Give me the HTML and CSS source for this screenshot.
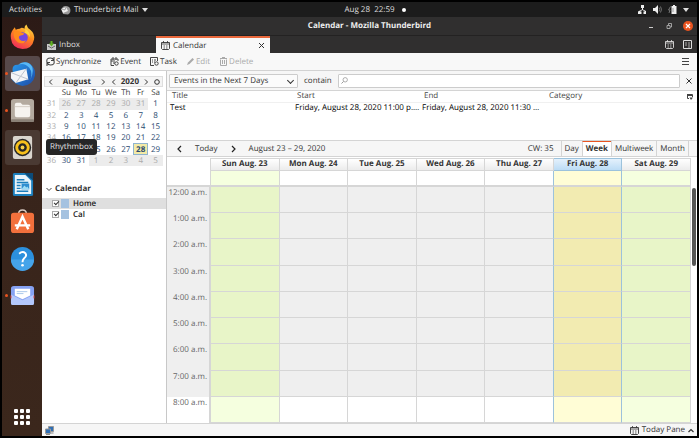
FILE: index.html
```
<!DOCTYPE html>
<html lang="en">
<head>
  <meta charset="UTF-8" />
  <meta name="viewport" content="width=device-width, initial-scale=1.0"/>
  <title>Calendar - Mozilla Thunderbird</title>
  <link rel="stylesheet" href="styles.css">
</head>
<body>
  <header class="topbar">
    <div class="topbar-left">
      <button class="plain">Activities</button>
      <button class="plain app-menu">
        <svg width="10" height="10" viewBox="0 0 10 10"><path d="M1 4C1 1 5 0 8 2C10 4 10 8 7 9.500L2 9Z" fill="#999"/><path d="M0 4L5 2L7 6L2 8Z" fill="#eee"/><path d="M0 4L4 5L5 2" fill="none" stroke="#777" stroke-width=".6"/></svg>
        Thunderbird Mail
        <svg width="6" height="4" viewBox="0 0 6 4"><path d="M0 0H6L3 4Z" fill="#ddd"/></svg>
      </button>
    </div>
    <button class="plain clock">Aug 28&nbsp; 22:59 <span class="notify-dot"></span></button>
    <div class="topbar-right">
      <svg width="9" height="9" viewBox="0 0 9 9" fill="#eee"><path d="M3 0H6V3H5V4.500L8 6V9H5.500V6.500H7L4.500 5L2 6.500H3.500V9H0V6.500L4 4.500V3H3Z"/></svg>
      <svg width="9" height="9" viewBox="0 0 9 9"><path d="M0 3H2L5 0V9L2 6H0Z" fill="#eee"/><path d="M6 2.500Q7.500 4.500 6 6.500M7.500 1.500Q9.500 4.500 7.500 7.500" fill="none" stroke="#888" stroke-width=".8"/></svg>
      <svg width="9" height="9" viewBox="0 0 9 9"><path d="M5 0H7V1H8.500V9H3.500V1H5Z" fill="#eee"/><path d="M5 3V7M2.500 1.500L.5 5H2L1 8" stroke="#888" stroke-width=".8" fill="none"/></svg>
      <svg width="6" height="4" viewBox="0 0 6 4"><path d="M0 0H6L3 4Z" fill="#ddd"/></svg>
    </div>
  </header>

  <div class="desktop">
    <nav class="dock">
      <a href="#" class="dock-item" aria-label="Firefox">
        <svg viewBox="0 0 26 26">
          <defs>
            <linearGradient id="fx" x1=".8" y1="0" x2=".3" y2="1"><stop offset="0" stop-color="#ffe14a"/><stop offset=".45" stop-color="#ff8a1e"/><stop offset="1" stop-color="#f02a5c"/></linearGradient>
            <linearGradient id="bird" x1="0" y1="0" x2="1" y2="1"><stop offset="0" stop-color="#2a9df0"/><stop offset="1" stop-color="#1d4ba6"/></linearGradient>
          </defs>
          <path d="M3 6L5 3.500L6 6Q8 5 10 5L12 4Q14 4 15 5Q15 2 17 .5Q18 4 21 6Q26 10 25 16Q23 26 13 26Q2 25 1 15Q0 10 3 6Z" fill="url(#fx)"/>
          <circle cx="13" cy="14" r="5.500" fill="#7547e0"/>
          <path d="M4 8Q9 6 12 9L15 10Q14 12 11 12Q8 13 10 16Q13 19 17 17Q14 22 8 19Q3 15 4 8Z" fill="#ff8b1d"/>
          <path d="M15 5Q21 7 21 14Q19 10 15 9Q17 7 15 5Z" fill="#ffd33d"/>
        </svg>
      </a>
      <a href="#" class="dock-item active running" aria-label="Thunderbird Mail">
        <svg viewBox="0 0 26 26">
          <path d="M3 12Q1 3 9 4Q14 -1 21 3Q27 8 26 15Q24 25 13 26Q5 25 1 18Z" fill="url(#bird)"/>
          <path d="M8 4Q15 1 20 7Q24 12 21 20Q25 12 23 6Q18 -2 8 4Z" fill="#59b8f5"/>
          <path d="M1 12L17 8L19 19L6 23L1 18Z" fill="#f4f5f7"/>
          <path d="M1 12L11 16L17 8M11 16L6 23M11 16L19 19" fill="none" stroke="#b9c0cb"/>
        </svg>
      </a>
      <a href="#" class="dock-item running" aria-label="Files">
        <svg viewBox="0 0 26 26">
          <rect x="1" y="1" width="24" height="24" rx="3" fill="#b4aa9f"/>
          <rect x="1" y="22" width="24" height="3" rx="1" fill="#8b8177"/>
          <path d="M5 7Q5 5 7 5H11L13 7H19Q21 7 21 9V18Q21 20 19 20H7Q5 20 5 18Z" fill="#f6f3ef"/>
          <path d="M5 9H21" stroke="#d3ccc4"/>
        </svg>
      </a>
      <a href="#" class="dock-item hover" aria-label="Rhythmbox">
        <svg viewBox="0 0 26 26">
          <rect x="3" y="1" width="20" height="24" rx="2" fill="#d9d5cd"/>
          <circle cx="13" cy="13" r="9" fill="#262626"/>
          <circle cx="13" cy="13" r="6" fill="none" stroke="#f7c01c" stroke-width="3"/>
          <circle cx="13" cy="13" r="2" fill="#f7d24a"/>
        </svg>
      </a>
      <a href="#" class="dock-item" aria-label="LibreOffice Writer">
        <svg viewBox="0 0 26 26">
          <path d="M4 1H17L24 8V24Q24 25 22 25H5Q3 25 3 24V2Z" fill="#1c7fbd"/>
          <path d="M5 3H16L22 9V23H5Z" fill="#e9f4fb"/>
          <path d="M15 1H24V9Z" fill="#0c4b78"/>
          <path d="M7 8H15M7 11H19M7 14H11M7 17H11M7 20H19" stroke="#1c7fbd" stroke-width="1.500"/>
          <rect x="12" y="12" width="8" height="6" fill="#2f8ed0"/>
          <path d="M12 18L15 14L17 16L18 15L20 18Z" fill="#9ddcf5"/>
        </svg>
      </a>
      <a href="#" class="dock-item" aria-label="Ubuntu Software">
        <svg viewBox="0 0 26 26">
          <path d="M9 5Q9 1 13 1Q17 1 17 5" fill="none" stroke="#d8cbc4" stroke-width="1.500"/>
          <rect x="1" y="4" width="24" height="21" rx="3" fill="#f2703c"/>
          <path d="M7 21L13 8L19 21M5 17H21" fill="none" stroke="#fff" stroke-width="2.500"/>
        </svg>
      </a>
      <a href="#" class="dock-item" aria-label="Help">
        <svg viewBox="0 0 26 26">
          <circle cx="13" cy="13" r="12" fill="#2c90dd"/>
          <path d="M1 14A12 12 0 0 0 25 14Z" fill="#45a4ea"/>
          <path d="M9.500 8Q13 5 16 7.500Q18 10.500 14.500 13Q13 14.500 13 17" fill="none" stroke="#fff" stroke-width="2"/>
          <circle cx="13" cy="20" r="1.400" fill="#fff"/>
        </svg>
      </a>
      <a href="#" class="dock-item running" aria-label="Mail">
        <svg viewBox="0 0 26 26">
          <rect x="1" y="3" width="24" height="20" rx="3" fill="#86a1f2"/>
          <path d="M5 6H21V13L13 17L5 13Z" fill="#fff"/>
          <path d="M7 9H18M7 11H14" stroke="#a9c7ea"/>
          <path d="M1 12L13 18L25 12V21Q25 23 23 23H3Q1 23 1 21Z" fill="#b3c7fb"/>
          <path d="M1 13V16M25 13V16" stroke="#d43b3b"/>
        </svg>
      </a>
      <button class="plain show-apps" aria-label="Show Applications">
        <i></i><i></i><i></i><i></i><i></i><i></i><i></i><i></i><i></i>
      </button>
      <span class="tooltip">Rhythmbox</span>
    </nav>

    <main class="window">
      <div class="titlebar">
        <span class="title">Calendar - Mozilla Thunderbird</span>
        <div class="window-buttons">
          <button class="plain" aria-label="Minimize"><svg width="8" height="8" viewBox="0 0 8 8"><path d="M2 5.500H6" stroke="#ccc"/></svg></button>
          <button class="plain" aria-label="Restore"><svg width="8" height="8" viewBox="0 0 8 8"><path d="M2 3.500H5V6.500H2ZM3.500 3V1.500H6.500V5H5" fill="none" stroke="#bbb" stroke-width=".8"/></svg></button>
          <button class="plain close" aria-label="Close"><svg width="10" height="10" viewBox="0 0 10 10"><path d="M3 3L7 7M7 3L3 7" stroke="#fff" stroke-width="1.200"/></svg></button>
        </div>
      </div>

      <div class="tabs">
        <button class="tab">
          <svg width="9" height="9" viewBox="0 0 9 9"><path d="M0 3H9V9H0Z" fill="#c9c9c9"/><path d="M1 5L4.500 7L8 5" fill="none" stroke="#666"/><path d="M3.500 0H5.500V2.500H7L4.500 5.500L2 2.500H3.500Z" fill="#62b322"/></svg>
          Inbox
        </button>
        <button class="tab selected">
          <svg width="9" height="9" viewBox="0 0 9 9"><use href="#cal"/></svg>
          <span>Calendar</span>
          <svg class="tab-close" width="7" height="7" viewBox="0 0 7 7"><path d="M1 1L6 6M6 1L1 6" stroke="#333"/></svg>
        </button>
        <div class="tab-actions">
          <button class="plain" aria-label="Calendar"><svg width="9" height="9" viewBox="0 0 9 9"><g id="cal"><path d="M.5 1.500H8.500V7.500L7.500 8.500H1.500L.5 7.500Z" fill="none" stroke="currentColor" stroke-width=".9"/><path d="M1 3H8M2.500 0V2M6.500 0V2M2.500 5H4M5 5H6.500M2.500 7H4M5 7H6.500" stroke="currentColor" stroke-width=".8"/></g></svg></button>
          <button class="plain" aria-label="Tasks"><svg width="9" height="9" viewBox="0 0 9 9"><path d="M.5 .5H8.500V8.500H.5Z" fill="none" stroke="#ddd"/><path d="M2 3H4M5 3H7M2 5H4M5 5H7M5 7H7" stroke="#aaa"/></svg></button>
        </div>
      </div>

      <div class="toolbar">
        <button class="tool"><svg width="9" height="9" viewBox="0 0 9 9"><path d="M1 5Q0 1 4.500 1Q7 1 7.500 3M8 0V3.500H5M8 4Q9 8 4.500 8Q2 8 1.500 6M1 9V5.500H4" fill="none" stroke="#444" stroke-width="1.100"/></svg>Synchronize</button>
        <button class="tool"><svg width="9" height="9" viewBox="0 0 9 9"><path d="M4 8.500H1V2H8V4M3 0V3M6 0V3M1 4H5M3 6H5" fill="none" stroke="#444"/><circle cx="6.500" cy="6.500" r="1.700" fill="none" stroke="#444"/></svg>Event</button>
        <button class="tool"><svg width="9" height="9" viewBox="0 0 9 9"><path d="M4 8.500H.5V.5H7.500V4M2 3H3M4 3H6M2 5H3M4 5H5" fill="none" stroke="#444"/><circle cx="6.500" cy="6.500" r="1.700" fill="none" stroke="#444"/></svg>Task</button>
        <button class="tool" disabled><svg width="9" height="9" viewBox="0 0 9 9"><path d="M1 8L2 5.500L6.500 1L8 2.500L3.500 7Z" fill="#aaa"/></svg>Edit</button>
        <button class="tool" disabled><svg width="9" height="9" viewBox="0 0 9 9"><path d="M1 1.500H8M3 .5H6M1.500 2.500V8.500H7.500V2.500M3.500 3V7M5.500 3V7" fill="none" stroke="#aaa"/></svg>Delete</button>
        <button class="plain menu" aria-label="Menu"><svg width="7" height="7" viewBox="0 0 7 7"><path d="M0 .5H7M0 3.500H7M0 6.500H7" stroke="#444"/></svg></button>
      </div>

      <div class="content">
        <aside class="sidebar">
          <div class="month-nav">
            <button class="plain" aria-label="Previous month"><svg width="5" height="6" viewBox="0 0 5 6"><path id="prev" d="M4 .5L1.500 3L4 5.500" fill="none" stroke="#333"/></svg></button>
            <b class="month-name">August</b>
            <button class="plain" aria-label="Next month"><svg width="5" height="6" viewBox="0 0 5 6"><path id="next" d="M1 .5L3.500 3L1 5.500" fill="none" stroke="#333"/></svg></button>
            <button class="plain" aria-label="Previous year"><svg width="5" height="6" viewBox="0 0 5 6"><use href="#prev"/></svg></button>
            <b>2020</b>
            <button class="plain" aria-label="Next year"><svg width="5" height="6" viewBox="0 0 5 6"><use href="#next"/></svg></button>
            <button class="plain" aria-label="Go to today"><svg width="6" height="6" viewBox="0 0 6 6"><circle cx="3" cy="3" r="2.300" fill="none" stroke="#333"/></svg></button>
          </div>
          <table class="minimonth">
            <tr><th></th><th>Su</th><th>Mo</th><th>Tu</th><th>We</th><th>Th</th><th>Fr</th><th>Sa</th></tr>
            <tr><td class="wk">31</td><td class="other">26</td><td class="other">27</td><td class="other">28</td><td class="other">29</td><td class="other">30</td><td class="other">31</td><td>1</td></tr>
            <tr><td class="wk">32</td><td>2</td><td>3</td><td>4</td><td>5</td><td>6</td><td>7</td><td>8</td></tr>
            <tr><td class="wk">33</td><td>9</td><td>10</td><td>11</td><td>12</td><td>13</td><td>14</td><td>15</td></tr>
            <tr><td class="wk">34</td><td>16</td><td>17</td><td>18</td><td>19</td><td>20</td><td>21</td><td>22</td></tr>
            <tr><td class="wk">35</td><td>23</td><td>24</td><td>25</td><td>26</td><td>27</td><td class="today">28</td><td>29</td></tr>
            <tr><td class="wk">36</td><td>30</td><td>31</td><td class="other">1</td><td class="other">2</td><td class="other">3</td><td class="other">4</td><td class="other">5</td></tr>
          </table>
          <h2 class="list-title"><svg width="6" height="5" viewBox="0 0 6 5"><path d="M.5 1L3 3.500L5.500 1" fill="none" stroke="#444"/></svg>Calendar</h2>
          <div class="cal-row current"><input type="checkbox" id="home" checked><label for="home"><span class="swatch"></span>Home</label></div>
          <div class="cal-row"><input type="checkbox" id="cal-local" checked><label for="cal-local"><span class="swatch"></span>Cal</label></div>
        </aside>

        <section class="calendar">
          <div class="filter">
            <div class="select">
              <select aria-label="Events shown"><option>Events in the Next 7 Days</option></select>
            </div>
            <label for="search">contain</label>
            <div class="search">
              <svg width="7" height="7" viewBox="0 0 7 7"><circle cx="4.200" cy="2.800" r="2.200" fill="none" stroke="#999" stroke-width=".8"/><path d="M2.500 4.500L.5 6.500" stroke="#999"/></svg>
              <input type="text" id="search">
            </div>
            <button class="plain" aria-label="Close search"><svg width="6" height="6" viewBox="0 0 6 6"><path d="M.5 .5L5.500 5.500M5.500 .5L.5 5.500" stroke="#333"/></svg></button>
          </div>

          <div class="events">
            <table>
              <tr><th>Title</th><th>Start</th><th>End</th><th>Category<svg class="picker" width="6" height="6" viewBox="0 0 6 6"><path d="M.5 .5H5.500V3M.5 0V4.500H2M0 1.500H6" fill="none" stroke="#444"/><path d="M2.500 3.500H6L4 6Z" fill="#444"/></svg></th></tr>
              <tr><td>Test</td><td>Friday, August 28, 2020 11:00 p.…</td><td>Friday, August 28, 2020 11:30 …</td><td></td></tr>
            </table>
          </div>

          <div class="view-nav">
            <button class="plain" aria-label="Previous week"><svg width="5" height="8" viewBox="0 0 5 8"><path d="M4 1L1 4L4 7" fill="none" stroke="#222" stroke-width="1.200"/></svg></button>
            <button class="plain">Today</button>
            <button class="plain" aria-label="Next week"><svg width="5" height="8" viewBox="0 0 5 8"><path d="M1 1L4 4L1 7" fill="none" stroke="#222" stroke-width="1.200"/></svg></button>
            <span class="range">August 23 – 29, 2020</span>
            <span class="week-no">CW: 35</span>
            <button class="view">Day</button>
            <button class="view selected">Week</button>
            <button class="view">Multiweek</button>
            <button class="view">Month</button>
          </div>

          <div class="week">
            <div class="week-grid" id="week"></div>
            <div class="scrollbar"><span></span></div>
          </div>
        </section>
      </div>

      <footer class="statusbar">
        <svg width="9" height="9" viewBox="0 0 9 9"><path d="M3.500 .5H8.500V5.500H3.500Z" fill="#2f6fb5" stroke="#999"/><path d="M.5 3H5.500V7.500H.5Z" fill="#2f6fb5" stroke="#999"/><path d="M1 8.500H5M6 7H8.500" stroke="#888"/></svg>
        <button class="plain today-pane">
          <svg width="9" height="9" viewBox="0 0 9 9"><use href="#cal"/></svg>
          Today Pane
          <svg width="6" height="5" viewBox="0 0 6 5"><path d="M.5 4L3 1.500L5.500 4" fill="none" stroke="#333" stroke-width="1.200"/></svg>
        </button>
      </footer>
    </main>
  </div>

  <script src="script.js"></script>
</body>
</html>
```
FILE: styles.css
```
* {
  box-sizing: border-box;
}

body {
  margin: 0;
  padding: 2px;
  height: 100vh;
  display: flex;
  flex-direction: column;
  overflow: hidden;
  background: #000;
  font-family: 'Open Sans', 'Noto Sans', sans-serif;
  font-size: 8px;
  line-height: 10px;
  text-rendering: geometricPrecision;
  color: #333;
}

button, input, select {
  font: inherit;
  color: inherit;
  text-rendering: inherit;
}

button {
  background: none;
  border: none;
  padding: 0;
  white-space: nowrap;
}

svg {
  display: block;
  flex: none;
}

.plain {
  display: flex;
  align-items: center;
}

/* Top bar */
.topbar {
  flex: none;
  height: 15px;
  display: grid;
  grid-template-columns: 1fr auto 1fr;
  align-items: center;
  padding: 0 8px 0 7px;
  background: #1c1c1c;
  color: #ddd;
}

.topbar-left,
.topbar-right {
  display: flex;
  align-items: center;
}

.topbar-left {
  gap: 19px;
}

.app-menu {
  gap: 3px;
}

.clock {
  padding-left: 52px;
  gap: 7px;
}

.notify-dot {
  width: 4px;
  height: 4px;
  border-radius: 50%;
  background: #fff;
}

.topbar-right {
  justify-content: flex-end;
  gap: 6px;
}

.desktop {
  flex: 1;
  min-height: 0;
  display: flex;
}

/* Dock */
.dock {
  position: relative;
  flex: none;
  width: 40px;
  display: flex;
  flex-direction: column;
  align-items: center;
  gap: 2px;
  padding: 2px 0 11px;
  background: linear-gradient(#2c1a16, #38241b 40%, #3b271c);
}

.dock-item {
  position: relative;
  width: 35px;
  height: 35px;
  padding: 5px;
  border-radius: 3px;
}

.dock-item.active {
  background: #57494a;
}

.dock-item.hover {
  background: #4a3a33;
}

.dock-item.running::before {
  content: "";
  position: absolute;
  left: 0;
  top: 16px;
  width: 3px;
  height: 3px;
  border-radius: 50%;
  background: #e95420;
}

.show-apps {
  display: grid;
  grid-template-columns: repeat(3, 4px);
  gap: 2px;
  margin-top: auto;
}

.show-apps i {
  height: 4px;
  border-radius: 1px;
  background: #fff;
}

.tooltip {
  position: absolute;
  z-index: 1;
  left: 44px;
  top: 122px;
  padding: 3px 4px;
  border-radius: 3px;
  background: #262626;
  color: #e4e4e4;
}

/* Window */
.window {
  flex: 1;
  min-width: 0;
  display: flex;
  flex-direction: column;
  background: #fff;
}

.titlebar {
  flex: none;
  height: 19px;
  display: grid;
  grid-template-columns: 1fr auto 1fr;
  align-items: center;
  background: #302f2f;
  border-bottom: 1px solid #232222;
  color: #eee;
}

.title {
  grid-column: 2;
  font-weight: bold;
}

.window-buttons {
  display: flex;
  justify-content: flex-end;
  gap: 10px;
  padding-right: 4px;
}

.close {
  border-radius: 50%;
  background: #e95420;
}

.tabs {
  flex: none;
  height: 17px;
  display: flex;
  background: #302f2f;
  color: #ddd;
}

.tab {
  flex: 0 0 114px;
  display: flex;
  align-items: center;
  gap: 3px;
  padding: 1px 5px 0;
}

.tab.selected {
  padding-top: 0;
  background: #f8f8f8;
  color: #333;
  border-top: 2px solid #e9683c;
}

.tab-close {
  margin-left: auto;
}

.tab-actions {
  margin-left: auto;
  display: flex;
  gap: 9px;
  padding-right: 5px;
}

.toolbar {
  flex: none;
  height: 18px;
  display: flex;
  align-items: center;
  gap: 9px;
  padding: 0 8px 0 4px;
  background: #f8f8f8;
  border-bottom: 1px solid #d2d2d2;
}

.tool {
  display: flex;
  align-items: center;
  gap: 1px;
}

.tool:disabled {
  color: #aaa;
}

.menu {
  margin-left: auto;
}

.content {
  flex: 1;
  min-height: 0;
  display: flex;
}

/* Sidebar */
.sidebar {
  flex: none;
  width: 125px;
  padding: 5px 3px 0 2px;
  border-right: 1px solid #c8c8c8;
}

.month-nav {
  height: 11px;
  display: flex;
  align-items: center;
  gap: 5px;
  padding: 0 2px 0 3px;
  background: #f4f4f4;
  border: 1px solid #dedede;
}

.month-name {
  flex: 1;
  text-align: center;
}

.minimonth {
  width: 100%;
  height: 79px;
  table-layout: fixed;
  border-collapse: collapse;
  line-height: 9px;
  text-align: center;
  color: #2a4a70;
}

.minimonth th,
.minimonth td {
  padding: 0;
}

.minimonth th {
  font-weight: normal;
  color: #444;
}

.minimonth .wk {
  color: #aaa;
}

.minimonth .other {
  background: #ececec;
  color: #aaa;
}

.minimonth .today {
  background: #f3eaa6;
  box-shadow: inset 0 0 0 1px #8fb4cf;
  font-weight: bold;
}

.list-title {
  display: flex;
  align-items: center;
  gap: 3px;
  margin: 18px 0 4px 2px;
  font-size: 8px;
}

.cal-row {
  display: flex;
  align-items: center;
  height: 11px;
  margin: 0 -3px 0 -2px;
  padding-left: 10px;
  font-weight: 600;
  color: #222;
}

.cal-row.current {
  background: #dfdfdf;
}

.cal-row input {
  appearance: none;
  width: 7px;
  height: 7px;
  margin: 0 2px 0 0;
  border: 1px solid #aaa;
  background: #fff;
  position: relative;
}

.cal-row input:checked::before {
  content: "";
  position: absolute;
  left: 1px;
  top: 0;
  width: 4px;
  height: 2px;
  border: solid #333;
  border-width: 0 0 1px 1px;
  transform: rotate(-45deg);
}

.cal-row label {
  display: flex;
  align-items: center;
  gap: 4px;
}

.swatch {
  width: 8px;
  height: 9px;
  background: #a5c2e0;
}

/* Filter bar and event list */
.calendar {
  flex: 1;
  min-width: 0;
  display: flex;
  flex-direction: column;
}

.filter {
  flex: none;
  height: 20px;
  display: flex;
  align-items: center;
  gap: 6px;
  padding: 0 5px 0 2px;
  background: #f6f6f6;
  border-bottom: 1px solid #d4d4d4;
}

.select {
  position: relative;
  display: flex;
}

.select select {
  appearance: none;
  width: 129px;
  height: 14px;
  padding: 0 4px;
  border: 1px solid #ccc;
  border-radius: 1px;
  background: #fbfbfb;
}

.select::after {
  content: "";
  position: absolute;
  right: 5px;
  top: 4px;
  width: 4px;
  height: 4px;
  border: solid #333;
  border-width: 0 1px 1px 0;
  transform: rotate(45deg);
  pointer-events: none;
}

.search {
  flex: 1;
  height: 14px;
  display: flex;
  align-items: center;
  padding-left: 2px;
  border: 1px solid #ccc;
  border-radius: 1px;
  background: #fff;
}

.search input {
  flex: 1;
  min-width: 0;
  border: none;
  padding: 0 2px;
  background: none;
  outline: none;
}

.events {
  flex: none;
  height: 49px;
}

.events table {
  width: 100%;
  table-layout: fixed;
  border-collapse: collapse;
}

.events th,
.events td {
  padding: 0 0 0 3px;
  height: 11px;
  text-align: left;
  white-space: nowrap;
}

.events th {
  position: relative;
  width: 125px;
  padding-left: 5px;
  font-weight: normal;
  color: #444;
  border-bottom: 1px solid #f0f0f0;
}

.events th:nth-child(2) {
  width: 127px;
}

.events th:last-child {
  width: auto;
}

.events td {
  font-weight: 500;
  color: #000;
}

.picker {
  position: absolute;
  right: 4px;
  top: 3px;
}

/* View navigation */
.view-nav {
  flex: none;
  height: 17px;
  display: flex;
  align-items: center;
  padding: 0 8px 0 10px;
  background: #f6f6f6;
  border: solid #d4d4d4;
  border-width: 1px 0;
}

.view-nav .plain {
  margin-right: 13px;
}

.week-no {
  margin: 0 7px 0 auto;
}

.view {
  height: 100%;
  padding: 0 3px;
  border-left: 1px solid #d4d4d4;
}

.view:last-child {
  border-right: 1px solid #d4d4d4;
}

.view.selected {
  background: #fff;
  border-top: 1px solid #e95420;
  font-weight: bold;
}

/* Week view */
.week {
  flex: 1;
  min-height: 0;
  display: flex;
  padding-top: 1px;
}

.week-grid {
  flex: 1;
  display: grid;
  grid-template-columns: 44px repeat(7, 1fr);
  grid-template-rows: 13px 16px repeat(9, 1fr);
}

.week-grid > div {
  min-height: 0;
  border: solid #d6d6d6;
  border-width: 0 1px 1px 0;
}

.week-grid .head {
  border-top-width: 1px;
  background: linear-gradient(#fff, #ececec);
  text-align: center;
  font-weight: bold;
  color: #333;
}

.week-grid .head.corner,
.week-grid .allday.corner {
  background: #fff;
}

.week-grid .head.corner {
  border-width: 0 1px 0 0;
}

.week-grid .allday {
  border-bottom-width: 2px;
}

.week-grid .time {
  padding: 1px 2px 0 0;
  border-right-width: 2px;
  border-bottom: none;
  background: #efefef;
  color: #666;
  text-align: right;
}

.week-grid .off {
  background: #efefef;
}

.week-grid .weekend {
  background: #f5ffdf;
}

.week-grid .weekend.off {
  background: #e8f5c8;
}

.week-grid .today {
  background: #fffdd6;
  border-right-color: #9cc2dc;
}

.week-grid .today.off {
  background: #f2ebb1;
}

.week-grid .before-today {
  border-right-color: #9cc2dc;
}

.week-grid .head.today {
  background: linear-gradient(#e4f1fc, #bcdcf5);
  border-color: #9cc2dc;
}

.week-grid .time.work {
  background: #fff;
}

.scrollbar {
  flex: none;
  width: 6px;
  padding: 30px 1px 0;
}

.scrollbar span {
  display: block;
  height: 78px;
  border-radius: 2px;
  background: #555;
}

.statusbar {
  flex: none;
  height: 13px;
  display: flex;
  align-items: center;
  justify-content: space-between;
  padding: 0 3px;
  background: #f6f6f6;
  border-top: 1px solid #d4d4d4;
}

.today-pane {
  gap: 3px;
}
```
FILE: script.js
```
const days = ['Sun Aug. 23', 'Mon Aug. 24', 'Tue Aug. 25', 'Wed Aug. 26', 'Thu Aug. 27', 'Fri Aug. 28', 'Sat Aug. 29'];
const hours = ['12:00', '1:00', '2:00', '3:00', '4:00', '5:00', '6:00', '7:00', '8:00'];
const week = document.getElementById('week');

function addCell(className, text) {
  const cell = document.createElement('div');
  cell.className = className;
  cell.textContent = text || '';
  week.appendChild(cell);
}

function dayClass(i) {
  if (i === 0 || i === 6) return ' weekend';
  if (i === 4) return ' before-today';
  if (i === 5) return ' today';
  return '';
}

addCell('head corner');
days.forEach((day, i) => addCell('head' + (i === 5 ? ' today' : ''), day));

addCell('allday corner');
days.forEach((day, i) => addCell('allday' + dayClass(i)));

hours.forEach(hour => {
  const work = hour === '8:00'; // work day starts at 8
  addCell('time' + (work ? ' work' : ''), hour + ' a.m.');
  days.forEach((day, i) => addCell((work ? 'slot' : 'slot off') + dayClass(i)));
});
```
